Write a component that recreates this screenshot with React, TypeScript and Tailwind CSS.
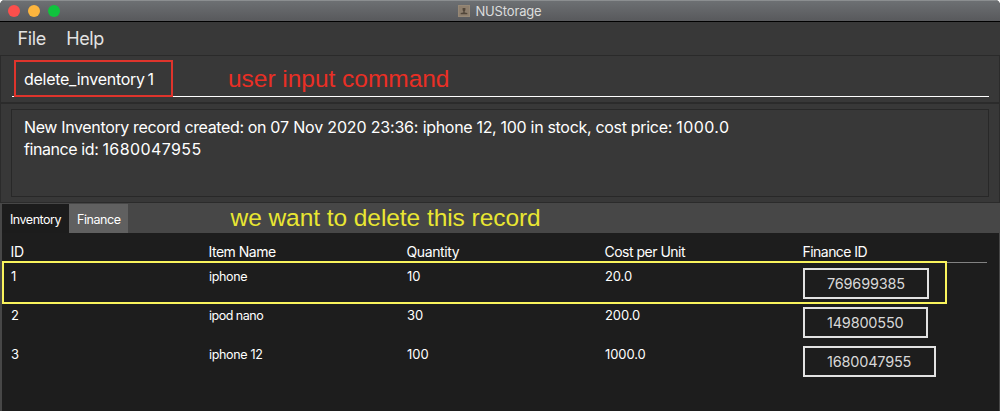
type Record = {
  id: string;
  name: string;
  nameTracking: string;
  quantity: string;
  cost: string;
  financeId: string;
  buttonWidth: string;
};

const records: Record[] = [
  { id: '1', name: 'iphone', nameTracking: 'tracking-[-0.36px]', quantity: '10', cost: '20.0', financeId: '769699385', buttonWidth: 'w-[126px]' },
  { id: '2', name: 'ipod nano', nameTracking: 'tracking-[-0.5px]', quantity: '30', cost: '200.0', financeId: '149800550', buttonWidth: 'w-[125px]' },
  { id: '3', name: 'iphone 12', nameTracking: 'tracking-[-0.32px]', quantity: '100', cost: '1000.0', financeId: '1680047955', buttonWidth: 'w-[133px]' },
];

const columns = [
  { label: 'ID', tracking: 'tracking-[-0.3px]' },
  { label: 'Item Name', tracking: 'tracking-[-0.5px]' },
  { label: 'Quantity', tracking: 'tracking-[-0.4px]' },
  { label: 'Cost per Unit', tracking: 'tracking-[-0.51px]' },
  { label: 'Finance ID', tracking: 'tracking-[-0.54px]' },
];

function TitleBar() {
  return (
    <header className="grid h-[22px] grid-cols-[1fr_auto_1fr] items-center border-b border-black bg-linear-to-b from-[#6e7174] to-[#58595c] shadow-[inset_0_1px_0_#8b8e90]">
      <div className="flex gap-2 pl-2">
        <span className="size-3 rounded-full bg-[#fc4f4c]" />
        <span className="size-3 rounded-full bg-[#fdb53e]" />
        <span className="size-3 rounded-full bg-[#0fc33d]" />
      </div>
      <div className="flex items-center gap-[5px]">
        <svg viewBox="0 0 12 12" className="size-3">
          <rect width="12" height="12" rx="1" fill="#8e7f6e" />
          <rect x="0.5" y="0.5" width="11" height="11" fill="none" stroke="#968876" />
          <path d="M4.6 3h2.8v2.200L6.700 6.200v1.200l2.600.6v1.200H2.700V8l2.600-.6V6.200l-.7-1z" fill="#51463a" />
        </svg>
        <span className="text-[13px] leading-4 tracking-[-0.15px] text-[#dcdddd]">NUStorage</span>
      </div>
    </header>
  );
}

function MenuBar() {
  return (
    <nav className="flex h-8.5 gap-[20.5px] border-b border-[#2a2a2a] pl-[17.5px] text-[18px] leading-[33px] tracking-[-0.4px] text-[#e2e2e2]">
      <span>File</span>
      <span>Help</span>
    </nav>
  );
}

function CommandBox() {
  return (
    <section className="relative h-12 border-x border-b-2 border-[#2b2b2b] px-[11px]">
      <div className="mr-[-1px] h-[41px] border-b border-white pl-3 text-[16px] leading-[46px] tracking-[-0.27px] text-white [word-spacing:-1.5px]">
        delete_inventory 1
      </div>
      <div className="absolute top-1 left-[13px] h-[37px] w-[159px] border-2 border-[#df342c]" />
      <p className="absolute top-[7px] left-[227px] font-['Liberation_Sans',sans-serif] text-[24.5px] leading-8 tracking-[-0.03px] whitespace-nowrap text-[#e92f25]">
        user input command
      </p>
    </section>
  );
}

function ResultBox() {
  return (
    <section className="h-[99px] border-x border-b border-[#2b2b2b] px-2.5 pt-[5px]">
      <div className="h-[88px] border border-[#282828] pt-[6px] pl-[12px] text-[16px] leading-[22px] text-white">
        <p className="whitespace-pre">
          <span className="tracking-[-0.36px]">{'New Inventory record created: on '}</span>
          <span className="tracking-[-0.17px]">{'07 Nov 2020 23:36: '}</span>
          <span className="tracking-[-0.31px]">{'iphone 12, 100 in stock, cost price: '}</span>
          <span className="tracking-[0.45px]">1000.0</span>
        </p>
        <p className="whitespace-pre">
          <span className="tracking-[-0.42px]">{'finance id: '}</span>
          <span className="tracking-[0.4px]">1680047955</span>
        </p>
      </div>
    </section>
  );
}

function Tabs() {
  return (
    <div className="relative flex h-[30px] shrink-0 items-stretch pl-0.5 text-[12.5px] leading-[31px] text-white">
      <div className="mt-px w-[67px] bg-[#1c1c1c] pl-2 tracking-[-0.5px]">Inventory</div>
      <div className="mt-px w-[59px] bg-[#606060] pl-2 tracking-[-0.45px]">Finance</div>
      <p className="absolute top-[-1px] left-[230.5px] font-['Liberation_Sans',sans-serif] text-[24.5px] leading-8 tracking-[-0.06px] whitespace-nowrap text-[#e9e632]">
        we want to delete this record
      </p>
    </div>
  );
}

function InventoryTable() {
  return (
    <div className="relative mr-px ml-0.5 flex-1 bg-[#1d1d1d]">
      <div className="mr-3 ml-2 grid h-[30px] grid-cols-[198px_198px_198px_198px_1fr] border-b border-[#828282] pl-[0.5px] text-[14px] leading-[38px] text-white">
        {columns.map((c) => (
          <span key={c.label} className={c.tracking}>{c.label}</span>
        ))}
      </div>
      {records.map((r) => (
        <div key={r.id} className="ml-2 grid h-[39px] grid-cols-[198px_198px_198px_198px_1fr] pl-px text-[13px] leading-[27px] text-white">
          <span>{r.id}</span>
          <span className={`text-[12.5px] ${r.nameTracking}`}>{r.name}</span>
          <span>{r.quantity}</span>
          <span className="tracking-[-0.1px]">{r.cost}</span>
          <button className={`mt-[5px] h-[31px] border-2 border-[#e2e2e2] pl-[22px] text-left text-[14.5px] leading-[27px] tracking-[-0.2px] text-[#d8d8d8] ${r.buttonWidth}`}>
            {r.financeId}
          </button>
        </div>
      ))}
      <div className="absolute top-7 left-0 h-[43px] w-[945px] border-2 border-[#f9f35c]" />
    </div>
  );
}

export default function App() {
  return (
    <div className="h-[411px] w-[1000px] bg-white font-[Inter,sans-serif]">
      <div className="flex h-full flex-col overflow-hidden rounded-t-[5px] bg-[#383838]">
        <TitleBar />
        <MenuBar />
        <CommandBox />
        <ResultBox />
        <main className="flex flex-1 flex-col bg-[#474747]">
          <Tabs />
          <InventoryTable />
        </main>
      </div>
    </div>
  );
}
